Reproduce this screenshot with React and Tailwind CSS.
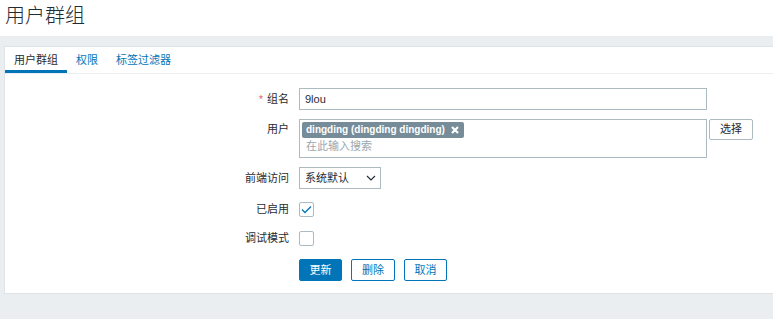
import React from 'react';

// 用户群组编辑页 (Zabbix 风格)
const FONT = { fontFamily: '"Liberation Sans", "Noto Sans CJK SC", sans-serif' };

function Row({ label, required, className = '', labelClass = 'items-center', children }) {
    return (
        <div className={`flex ${className}`}>
            <div className={`w-[294px] flex justify-end ${labelClass} pr-[10px] leading-[15px] text-[#1f2c33]`}>
                {required && <span className="text-[#e45959] mr-[4px] text-[10px]">*</span>}
                <span>{label}</span>
            </div>
            <div className="flex items-start">{children}</div>
        </div>
    );
}

function Checkbox({ checked }) {
    return (
        <div className="w-[15px] h-[15px] border border-[#acbbc2] bg-white rounded-[2px] flex items-center justify-center">
            {checked && (
                <svg width="11" height="9" viewBox="0 0 11 9" fill="none">
                    <path d="M1 4.5 L4 7.5 L10 1.5" stroke="#0275b8" strokeWidth="1.3" />
                </svg>
            )}
        </div>
    );
}

export default function App() {
    return (
        <div className="w-[773px] h-[319px] bg-[#ebeef0] overflow-hidden text-[11px] text-[#1f2c33]" style={FONT}>
            {/* 标题 */}
            <div className="h-[36px] bg-white pl-[5px] pt-[3px]">
                <h1 className="text-[20px] leading-[26px] font-light text-[#1f2c33]">用户群组</h1>
            </div>

            <div className="pt-[10px] pl-[4px]">
                <div className="bg-white border-l border-t border-b border-[#dfe4e7] pb-[12px]">
                    {/* 选项卡 */}
                    <div className="flex h-[27px] border-b border-[#ebeef0]">
                        <div className="px-[9px] flex items-center border-b-[3px] border-[#0275b8] text-[#1f2c33] pt-[3px]">用户群组</div>
                        <div className="px-[9px] flex items-center text-[#0275b8]">权限</div>
                        <div className="px-[9px] flex items-center text-[#0275b8]">标签过滤器</div>
                    </div>

                    {/* 表单 */}
                    <div className="pt-[14px]">
                        <Row label="组名" required className="h-[22px]">
                            <div className="w-[408px] h-[22px] border border-[#acbbc2] flex items-center px-[5px]">9lou</div>
                        </Row>

                        <Row label="用户" className="mt-[9px] h-[39px]" labelClass="items-start pt-[3px]">
                            <div className="w-[408px] h-[39px] border border-[#acbbc2] px-[2px] pt-[1px]">
                                <div className="inline-flex items-center h-[16px] bg-[#768d99] text-white font-bold text-[10px] pl-[4px] pr-[5px] rounded-[2px] gap-[6px]">
                                    <span>dingding (dingding dingding)</span>
                                    <svg width="8" height="8" viewBox="0 0 8 8">
                                        <path d="M1 1 L7 7 M7 1 L1 7" stroke="#fff" strokeWidth="2.2" />
                                    </svg>
                                </div>
                                <div className="pl-[4px] leading-[17px] text-[#9aa7ad]">在此输入搜索</div>
                            </div>
                            <div className="ml-[2px] w-[44px] h-[21px] border border-[#acbbc2] rounded-[2px] flex items-center justify-center text-[#1f2c33] bg-white">选择</div>
                        </Row>

                        <Row label="前端访问" className="mt-[9px] h-[22px]">
                            <div className="w-[82px] h-[22px] border border-[#acbbc2] flex items-center justify-between pl-[5px] pr-[4px]">
                                <span>系统默认</span>
                                <svg width="10" height="6" viewBox="0 0 10 6" fill="none">
                                    <path d="M1 1 L5 5 L9 1" stroke="#1f2c33" strokeWidth="1.1" />
                                </svg>
                            </div>
                        </Row>

                        <Row label="已启用" className="mt-[13px] h-[15px]">
                            <Checkbox checked />
                        </Row>

                        <Row label="调试模式" className="mt-[14px] h-[15px]">
                            <Checkbox />
                        </Row>

                        {/* 按钮 */}
                        <div className="flex pl-[294px] mt-[13px] gap-[9px]">
                            <button className="w-[43px] h-[22px] bg-[#0275b8] border border-[#0275b8] text-white rounded-[2px]">更新</button>
                            <button className="w-[44px] h-[22px] bg-white border border-[#0275b8] text-[#0275b8] rounded-[2px]">删除</button>
                            <button className="w-[43px] h-[22px] bg-white border border-[#0275b8] text-[#0275b8] rounded-[2px]">取消</button>
                        </div>
                    </div>
                </div>
            </div>
        </div>
    );
}
